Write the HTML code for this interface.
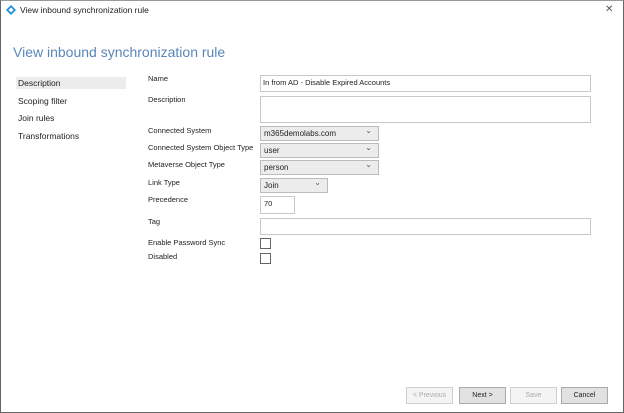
<!DOCTYPE html>
<html><head><style>
*{margin:0;padding:0;box-sizing:border-box}
body{width:624px;height:413px;background:#fff;font-family:"Liberation Sans",sans-serif;position:relative;overflow:hidden;font-size:8px;color:#222}
.a{position:absolute}
.box{position:absolute;border:1px solid #c8c8c8;background:#fff}
.sel{position:absolute;border:1px solid #bbb;background:#ececec;padding:2px 3px;font-size:8px}
.sel:after{content:"⌄";position:absolute;right:6px;top:-1px;font-size:8px;color:#555}
.cb{position:absolute;width:11px;height:11px;border:1px solid #666;background:#fff}
.btn{position:absolute;top:387px;height:17px;width:47px;border:1px solid #aaa;background:#e1e1e1;font-size:7px;text-align:center;line-height:15px}
.dis{background:#f4f4f4;border-color:#d0d0d0;color:#aaa}
.nav{position:absolute;left:18px;font-size:8.5px}
.lbl{position:absolute;left:148px;font-size:7.5px}
</style></head><body>
<div class="a" style="left:0;top:0;width:624px;height:413px;border:1px solid #666;border-top-color:#999"></div>
<svg class="a" style="left:6px;top:5px" width="10" height="10" viewBox="0 0 10 10"><path d="M5 0L10 5L5 10L0 5Z" fill="#1e90d8"/><path d="M5 2.5L7.5 5L5 7.5L2.5 5Z" fill="#fff"/></svg>
<div class="a" style="left:20px;top:5px;font-size:8.5px">View inbound synchronization rule</div>
<div class="a" style="left:605px;top:4px;font-size:10px;color:#555">✕</div>
<div class="a" style="left:13px;top:44px;font-size:14px;color:#5a86b8">View inbound synchronization rule</div>
<div class="a" style="left:16px;top:77px;width:110px;height:12px;background:#ececec"></div>
<div class="nav" style="top:78px">Description</div>
<div class="nav" style="top:96px">Scoping filter</div>
<div class="nav" style="top:113px">Join rules</div>
<div class="nav" style="top:131px">Transformations</div>
<div class="lbl" style="top:74px">Name</div>
<div class="lbl" style="top:95px">Description</div>
<div class="lbl" style="top:126px">Connected System</div>
<div class="lbl" style="top:143px">Connected System Object Type</div>
<div class="lbl" style="top:160px">Metaverse Object Type</div>
<div class="lbl" style="top:178px">Link Type</div>
<div class="lbl" style="top:195px">Precedence</div>
<div class="lbl" style="top:217px">Tag</div>
<div class="lbl" style="top:238px">Enable Password Sync</div>
<div class="lbl" style="top:252px">Disabled</div>
<div class="box" style="left:260px;top:75px;width:331px;height:17px;padding:2px 2px;font-size:7.5px">In from AD - Disable Expired Accounts</div>
<div class="box" style="left:260px;top:96px;width:331px;height:27px"></div>
<div class="sel" style="left:260px;top:126px;width:119px;height:15px">m365demolabs.com</div>
<div class="sel" style="left:260px;top:143px;width:119px;height:15px">user</div>
<div class="sel" style="left:260px;top:160px;width:119px;height:15px">person</div>
<div class="sel" style="left:260px;top:178px;width:68px;height:15px">Join</div>
<div class="box" style="left:260px;top:196px;width:35px;height:18px;padding:2px 3px;font-size:7.5px">70</div>
<div class="box" style="left:260px;top:218px;width:331px;height:17px"></div>
<div class="cb" style="left:260px;top:238px"></div>
<div class="cb" style="left:260px;top:253px"></div>
<div class="btn dis" style="left:406px">&lt; Previous</div>
<div class="btn" style="left:459px">Next &gt;</div>
<div class="btn dis" style="left:510px">Save</div>
<div class="btn" style="left:561px">Cancel</div>
</body></html>
